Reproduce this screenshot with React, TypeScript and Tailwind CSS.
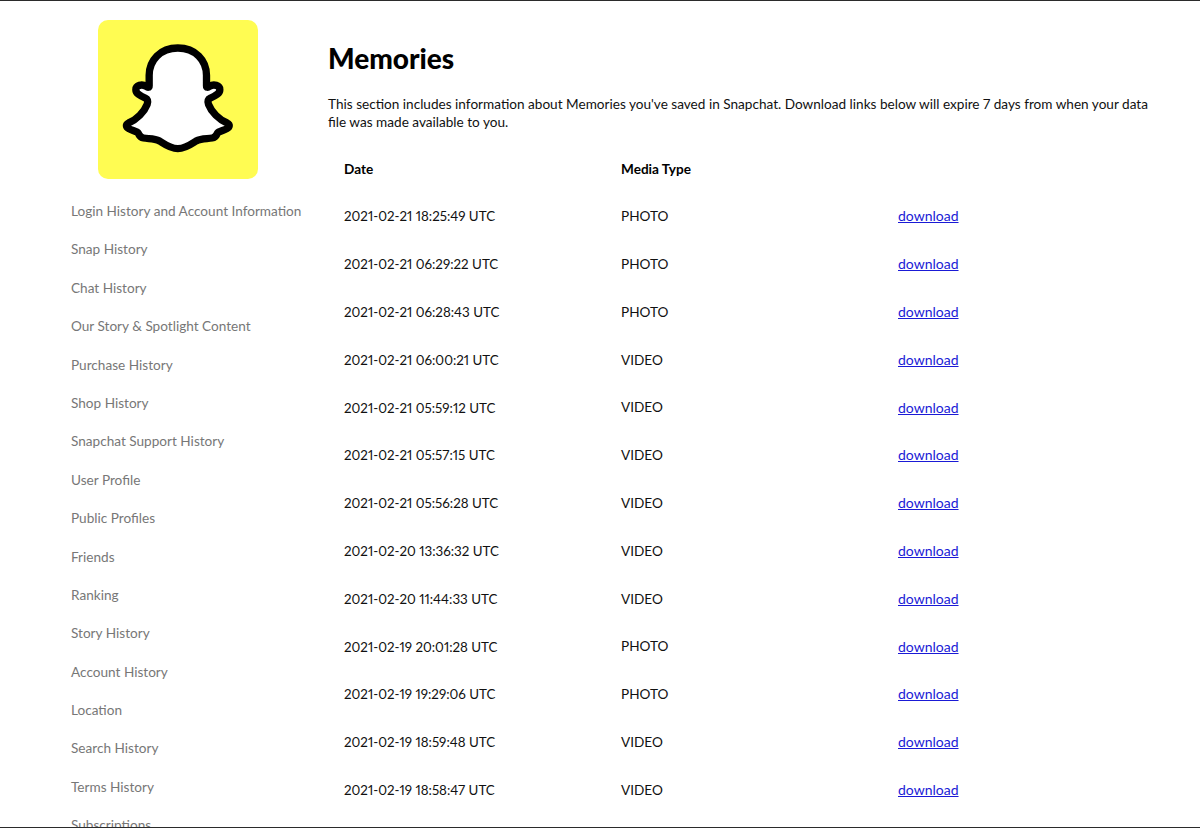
const navItems = [
  "Login History and Account Information",
  "Snap History",
  "Chat History",
  "Our Story & Spotlight Content",
  "Purchase History",
  "Shop History",
  "Snapchat Support History",
  "User Profile",
  "Public Profiles",
  "Friends",
  "Ranking",
  "Story History",
  "Account History",
  "Location",
  "Search History",
  "Terms History",
  "Subscriptions",
];

const memories = [
  ["2021-02-21 18:25:49 UTC", "PHOTO"],
  ["2021-02-21 06:29:22 UTC", "PHOTO"],
  ["2021-02-21 06:28:43 UTC", "PHOTO"],
  ["2021-02-21 06:00:21 UTC", "VIDEO"],
  ["2021-02-21 05:59:12 UTC", "VIDEO"],
  ["2021-02-21 05:57:15 UTC", "VIDEO"],
  ["2021-02-21 05:56:28 UTC", "VIDEO"],
  ["2021-02-20 13:36:32 UTC", "VIDEO"],
  ["2021-02-20 11:44:33 UTC", "VIDEO"],
  ["2021-02-19 20:01:28 UTC", "PHOTO"],
  ["2021-02-19 19:29:06 UTC", "PHOTO"],
  ["2021-02-19 18:59:48 UTC", "VIDEO"],
  ["2021-02-19 18:58:47 UTC", "VIDEO"],
];

function Logo() {
  return (
    <div className="w-[160px] h-[159px] rounded-[10px] bg-[#fffc52] ml-[27px]">
      <svg viewBox="55 59 477 477" className="w-full h-full">
        <path
          d="M293 143 C240 143 207 180 207 225 L207 256 C207 262 203 262 198 258 C185 250 167 255 167 268 C167 280 180 286 195 293 C203 297 204 303 201 312 C192 335 170 358 145 368 C136 372 137 381 146 385 C155 390 170 393 174 398 C178 405 178 411 190 413 C205 416 222 413 238 422 C255 433 270 445 293 445 C316 445 331 433 348 422 C364 413 381 416 396 413 C408 411 408 405 412 398 C416 393 431 390 440 385 C449 381 450 372 441 368 C416 358 394 335 385 312 C382 303 383 297 391 293 C406 286 419 280 419 268 C419 255 401 250 388 258 C383 262 379 262 379 256 L379 225 C379 180 346 143 293 143 Z"
          fill="#fff"
          stroke="#000"
          strokeWidth="22"
          strokeLinejoin="round"
        />
      </svg>
    </div>
  );
}

export default function App() {
  return (
    <div className="h-[828px] overflow-hidden bg-white font-['Lato',sans-serif] text-[13.6px] proportional-nums">
      <div className="h-[828px] overflow-hidden flex border-t border-b border-[#2b2b2b]">
        <aside className="w-[328px] shrink-0 pl-[71px] pt-[19px]">
          <Logo />
          <ul className="mt-[13px]">
            {navItems.map((item) => (
              <li key={item} className="h-[38.4px] leading-[38.4px] text-[#777] whitespace-nowrap">
                {item}
              </li>
            ))}
          </ul>
        </aside>
        <main className="flex-1 pt-[39px] text-[#111]">
          <h1 className="text-[28px] leading-[36px] font-black text-black">Memories</h1>
          <p className="mt-[19px] w-[840px] leading-[18px]">
            This section includes information about Memories you've saved in Snapchat. Download links below will expire 7 days from when your data file was made available to you.
          </p>
          <div className="mt-[13.7px] w-[831px]">
            <div className="grid grid-cols-[277px_277px_1fr] h-[47.8px] items-center pl-[16px] pt-[1px] font-bold text-black">
              <div>Date</div>
              <div>Media Type</div>
              <div />
            </div>
            {memories.map(([date, type]) => (
              <div key={date} className="grid grid-cols-[277px_277px_1fr] h-[47.8px] items-center pl-[16px]">
                <div className="text-[13.35px]">{date}</div>
                <div>{type}</div>
                <div className="text-[14px] pb-[1px]">
                  <a href="#" className="text-[#1a1ad6] underline">download</a>
                </div>
              </div>
            ))}
          </div>
        </main>
      </div>
    </div>
  );
}
